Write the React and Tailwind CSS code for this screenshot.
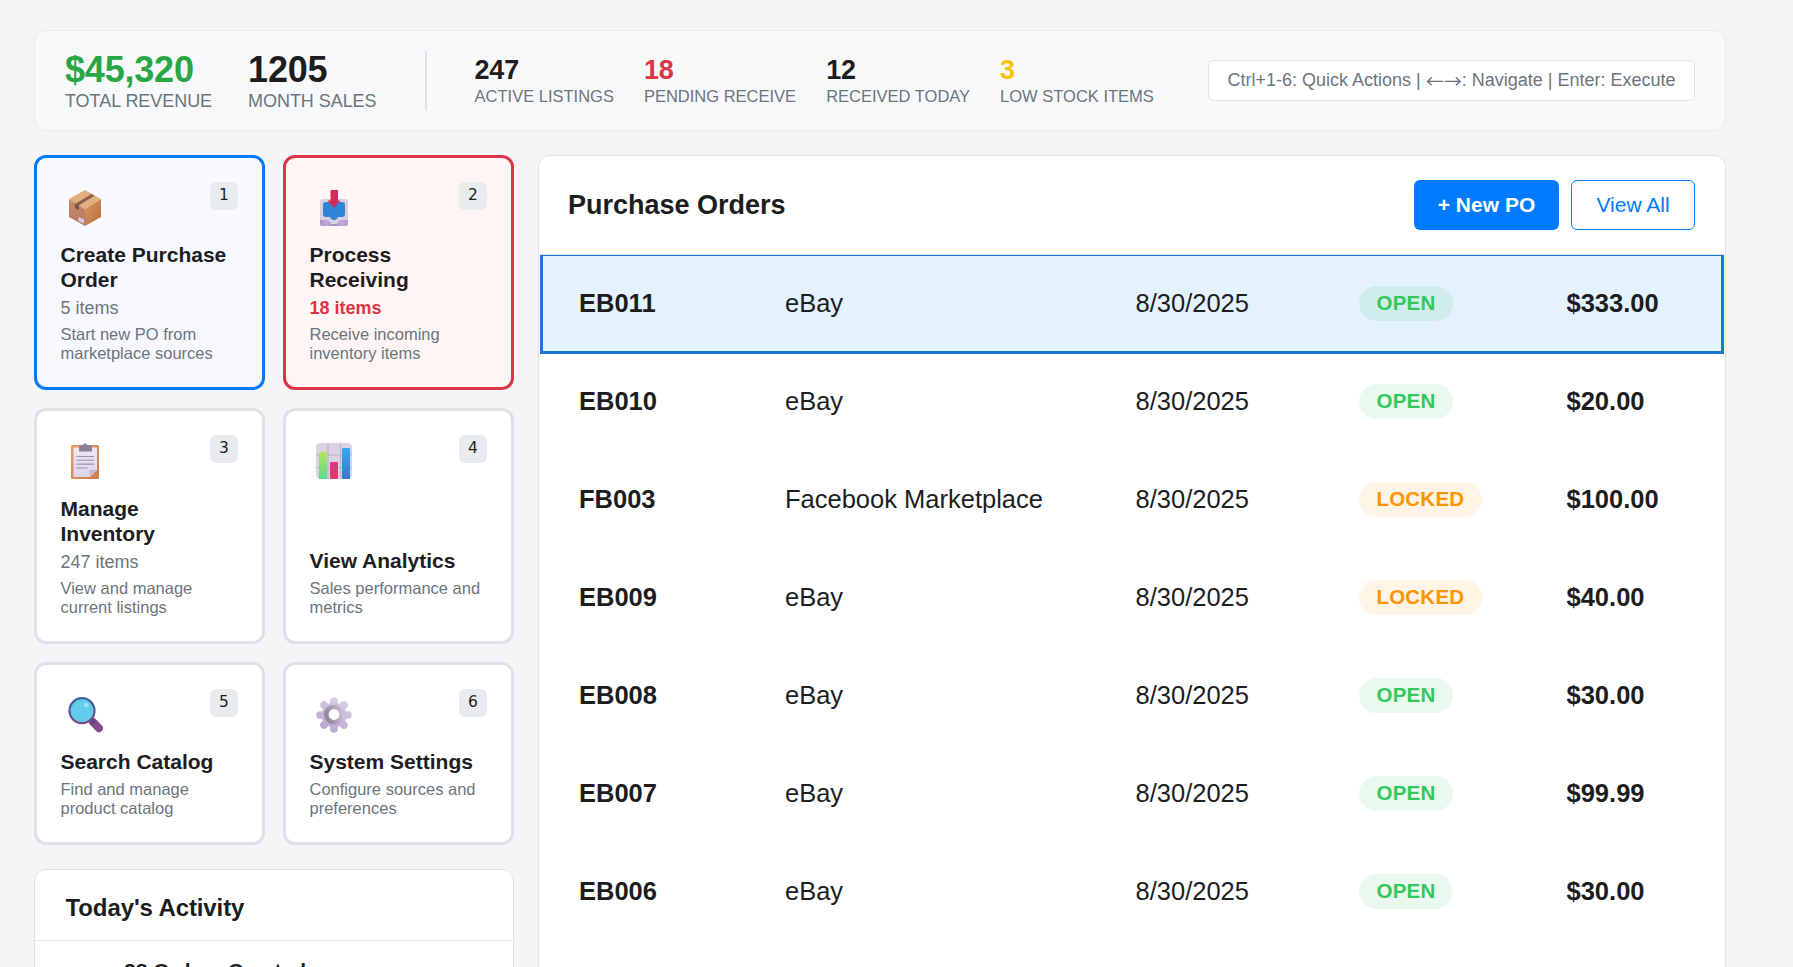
const fontStack = "font-['Liberation_Sans',Arial,sans-serif]";

function PackageIcon() {
  return (
    <svg width="36" height="36" viewBox="0 0 36 36">
      <defs>
        <linearGradient id="boxL" x1="0" y1="0" x2="0" y2="1"><stop offset="0" stopColor="#c98a66" /><stop offset="1" stopColor="#b9795f" /></linearGradient>
        <linearGradient id="boxR" x1="0" y1="0" x2="1" y2="1"><stop offset="0" stopColor="#d79c6c" /><stop offset="1" stopColor="#b9692f" /></linearGradient>
      </defs>
      <path d="M18 0 34 9 18 19 2 9Z" fill="#dfb07e" />
      <path d="M2 9 18 19V36L2 27Z" fill="url(#boxL)" />
      <path d="M34 9 18 19V36L34 27Z" fill="url(#boxR)" />
      <path d="M8 14 24.500 4 27.500 5.800 12 15.300V20L8 17.700Z" fill="#8d5f4c" />
      <path d="M8 14 12 15.500V20L8 17.700Z" fill="#77564f" />
      <path d="M11.500 27 17 29.500V33.500L11.500 31Z" fill="#dccbe0" />
    </svg>
  );
}

function InboxIcon() {
  return (
    <svg width="36" height="36" viewBox="-1 0 36 36">
      <defs>
        <linearGradient id="arrow" x1="0" y1="0" x2="1" y2="0"><stop offset="0" stopColor="#e02a3c" /><stop offset="1" stopColor="#c42a7c" /></linearGradient>
        <linearGradient id="tray" x1="0" y1="0" x2="1" y2="0"><stop offset="0" stopColor="#a595c4" /><stop offset=".25" stopColor="#c3a8dc" /><stop offset=".5" stopColor="#a48bbf" /><stop offset=".75" stopColor="#c3a8dc" /><stop offset="1" stopColor="#b09ccd" /></linearGradient>
      </defs>
      <rect x="3" y="9" width="28" height="27" rx="3" fill="#d8d0e2" />
      <path d="M3 30H11L14 33.500H20L23 30H31V34Q31 36 29 36H5Q3 36 3 34Z" fill="url(#tray)" />
      <path d="M12 29H22L20 34H14Z" fill="#d8d0e2" />
      <path d="M9 12H25Q28 12 28 15V24Q28 27 25 27H21Q20 30 17 30T13 27H9Q6 27 6 24V15Q6 12 9 12Z" fill="#2f84d5" />
      <path d="M14 0H20.500Q21 0 21 .6V10.500H23.500L17 18 10.500 10.500H13.500V.5Q13.500 0 14 0Z" fill="url(#arrow)" />
    </svg>
  );
}

function ClipboardIcon() {
  return (
    <svg width="36" height="36" viewBox="0 0 36 36">
      <defs>
        <linearGradient id="board" x1="0" y1="0" x2="1" y2="1"><stop offset="0" stopColor="#e5a06b" /><stop offset="1" stopColor="#cf7c45" /></linearGradient>
        <linearGradient id="paper" x1="0" y1="0" x2="0" y2="1"><stop offset="0" stopColor="#ece6f5" /><stop offset="1" stopColor="#dfd5ec" /></linearGradient>
      </defs>
      <rect x="4" y="2" width="28" height="34" rx="1.500" fill="url(#board)" />
      <path d="M6.500 4.500H30V27L23 34H6.500Z" fill="url(#paper)" />
      <path d="M22.500 34V27H30Z" fill="#c5b9d5" />
      <path d="M16 2Q18 -1.500 20 2H22Q25 2 25 5V8.500H12V5Q12 2 15 2Z" fill="#8b8190" />
      <path d="M9.500 13.500H27M9.500 17.300H27M9.500 21.100H27M9.500 25H20.500" stroke="#9d93a8" strokeWidth="1.100" />
    </svg>
  );
}

function ChartIcon() {
  return (
    <svg width="36" height="36" viewBox="0 0 36 36">
      <defs>
        <linearGradient id="g1" x1="0" y1="0" x2="0" y2="1"><stop offset="0" stopColor="#b6e35c" /><stop offset="1" stopColor="#5bd98d" /></linearGradient>
        <linearGradient id="g2" x1="0" y1="0" x2="0" y2="1"><stop offset="0" stopColor="#ea2f8e" /><stop offset="1" stopColor="#dc3c60" /></linearGradient>
        <linearGradient id="g3" x1="0" y1="0" x2="0" y2="1"><stop offset="0" stopColor="#37a8f7" /><stop offset="1" stopColor="#3b74c9" /></linearGradient>
      </defs>
      <rect width="36" height="36" rx="4.500" fill="#dad3e3" />
      <path d="M12 0V36M24.500 0V36M0 12H36M0 24.500H36" stroke="#bfb2cc" strokeWidth="1.200" />
      <rect x="3" y="9" width="8" height="27" rx="1" fill="url(#g1)" />
      <rect x="14" y="19" width="8" height="17" rx="1" fill="url(#g2)" />
      <rect x="26" y="5" width="8" height="31" rx="1" fill="url(#g3)" />
    </svg>
  );
}

function SearchIcon() {
  return (
    <svg width="36" height="36" viewBox="-1 0 36 36">
      <defs>
        <linearGradient id="rim" x1="0" y1="0" x2="0" y2="1"><stop offset="0" stopColor="#41629b" /><stop offset="1" stopColor="#734a86" /></linearGradient>
      </defs>
      <path d="M25 25 31 31.200" stroke="#844c8b" strokeWidth="8" strokeLinecap="round" />
      <path d="M22 22 26 26.200" stroke="#673e7b" strokeWidth="5" />
      <circle cx="14" cy="13.700" r="12.500" fill="#62cdeb" stroke="url(#rim)" strokeWidth="2.200" />
      <circle cx="18.500" cy="8" r="2.300" fill="#a9defa" />
    </svg>
  );
}

function GearIcon() {
  return (
    <svg width="36" height="36" viewBox="0 0 36 36">
      <defs>
        <linearGradient id="teeth" gradientUnits="userSpaceOnUse" x1="26" y1="2" x2="10" y2="34"><stop offset="0" stopColor="#d8cfe6" /><stop offset="1" stopColor="#b8a6d2" /></linearGradient>
        <linearGradient id="ring" x1="0" y1="0.300" x2="1" y2="0"><stop offset="0" stopColor="#94899f" /><stop offset="1" stopColor="#cabfd8" /></linearGradient>
      </defs>
      <path d="M18 4V32M4 18H32M8 8 28 28M28 8 8 28" stroke="url(#teeth)" strokeWidth="7.600" strokeLinecap="round" />
      <circle cx="18" cy="18" r="12.500" fill="url(#teeth)" />
      <circle cx="18" cy="17.500" r="7.700" fill="#fff" stroke="url(#ring)" strokeWidth="4.600" />
    </svg>
  );
}

const metrics = [
  { value: "247", label: "ACTIVE LISTINGS", color: "text-[#1d1d1f]" },
  { value: "18", label: "PENDING RECEIVE", color: "text-[#dc3545]" },
  { value: "12", label: "RECEIVED TODAY", color: "text-[#1d1d1f]" },
  { value: "3", label: "LOW STOCK ITEMS", color: "text-[#ffc107]" },
];

const plain = "border-[#dee2e6] bg-white";
const actions = [
  { key: 1, Icon: PackageIcon, title: "Create Purchase Order", count: "5 items", text: "Start new PO from marketplace sources", box: "border-[#007bff] bg-[#f8f9ff]", countStyle: "text-[#6c757d]" },
  { key: 2, Icon: InboxIcon, title: "Process Receiving", count: "18 items", text: "Receive incoming inventory items", box: "border-[#dc3545] bg-[#fff5f5]", countStyle: "text-[#dc3545] font-bold" },
  { key: 3, Icon: ClipboardIcon, title: "Manage Inventory", count: "247 items", text: "View and manage current listings", box: plain, countStyle: "text-[#6c757d]" },
  { key: 4, Icon: ChartIcon, title: "View Analytics", text: "Sales performance and metrics", box: plain },
  { key: 5, Icon: SearchIcon, title: "Search Catalog", text: "Find and manage product catalog", box: plain },
  { key: 6, Icon: GearIcon, title: "System Settings", text: "Configure sources and preferences", box: plain },
];

const orders = [
  ["EB011", "eBay", "OPEN", "$333.00"],
  ["EB010", "eBay", "OPEN", "$20.00"],
  ["FB003", "Facebook Marketplace", "LOCKED", "$100.00"],
  ["EB009", "eBay", "LOCKED", "$40.00"],
  ["EB008", "eBay", "OPEN", "$30.00"],
  ["EB007", "eBay", "OPEN", "$99.99"],
  ["EB006", "eBay", "OPEN", "$30.00"],
];

function StatsBar() {
  return (
    <header className="flex h-[101px] shrink-0 items-center rounded-xl border border-[#e9ecef] bg-[#f8f9fb] px-[30px]">
      <div className="flex gap-9">
        <div>
          <div className="pt-0.5 text-4xl leading-9 font-bold tracking-[-0.2px] text-[#28a745]">$45,320</div>
          <div className="mt-[3px] text-lg leading-5 tracking-[-0.05px] text-[#6c757d]">TOTAL REVENUE</div>
        </div>
        <div>
          <div className="pt-0.5 text-4xl leading-9 font-bold tracking-[-0.2px]">1205</div>
          <div className="mt-[3px] text-lg leading-5 tracking-[-0.05px] text-[#6c757d]">MONTH SALES</div>
        </div>
      </div>
      <div className="mx-12 h-[60px] w-0.5 bg-[#dee2e6]" />
      <div className="flex gap-[30px]">
        {metrics.map((m) => (
          <div key={m.label}>
            <div className={`text-[27px] leading-7 font-bold tracking-[-0.2px] ${m.color}`}>{m.value}</div>
            <div className="mt-0.5 text-[16.5px] leading-5 text-[#6c757d]">{m.label}</div>
          </div>
        ))}
      </div>
      <div className="ml-auto flex h-[41px] w-[487px] items-center justify-center rounded-md border border-[#dee2e6] bg-white pb-0.5 text-lg whitespace-pre text-[#6c757d]">
        Ctrl+1-6: Quick Actions | <span className="font-['Noto_Sans_CJK_SC',sans-serif] leading-5">←→</span>: Navigate | Enter: Execute
      </div>
    </header>
  );
}

function ActionCard({ action }) {
  const { Icon } = action;
  return (
    <div className={`flex flex-col justify-between rounded-xl border-3 py-6 pr-6 pl-[23.5px] ${action.box}`}>
      <div className="flex items-start justify-between">
        <div className="pt-2 pl-[6.5px]"><Icon /></div>
        <div className="flex size-7 items-center justify-center rounded-md bg-[#e9ecef] font-['DejaVu_Sans',sans-serif] text-[15.5px]">{action.key}</div>
      </div>
      <div>
        <div className="text-[21px] leading-[25.2px] font-bold">{action.title}</div>
        {action.count && <div className={`mt-[5px] text-lg leading-[22px] ${action.countStyle}`}>{action.count}</div>}
        <div className="mt-1.5 text-[16.5px] leading-[19px] text-[#6c757d]">{action.text}</div>
      </div>
    </div>
  );
}

function Status({ value }) {
  const tone = value === "OPEN" ? "bg-[#34c759]/10 text-[#34c759]" : "bg-[#ff9500]/10 text-[#ff9500]";
  return <span className={`inline-flex h-[35px] items-center rounded-[18px] px-[18px] text-[20.5px] font-bold tracking-[0.2px] ${tone}`}>{value}</span>;
}

function Orders() {
  return (
    <section className="flex grow flex-col rounded-t-xl border border-b-0 border-[#e1e1e6] bg-white">
      <div className="flex h-[99px] shrink-0 items-center justify-between border-b border-[#e1e1e6] pr-[30px] pl-[29px]">
        <h2 className="text-[27px] font-bold">Purchase Orders</h2>
        <div className="flex gap-3">
          <button className="h-[50px] w-[145px] rounded-md bg-[#007bff] text-[21px] font-bold text-white">+ New PO</button>
          <button className="h-[50px] w-[124px] rounded-md border border-[#007bff] bg-white text-[21px] text-[#007bff]">View All</button>
        </div>
      </div>
      <div className="px-px">
        {orders.map(([id, source, status, total], i) => (
          <div
            key={id}
            className={`grid grid-cols-[206px_350.500px_223px_208px_1fr] items-center pl-9 text-[25.5px] ${i === 0 ? "h-[99px] border-3 border-t border-[#1976d2] bg-[#e3f2fd]" : "h-[98px] border-x-3 border-transparent pb-[3px]"}`}
          >
            <div className="font-bold">{id}</div>
            <div>{source}</div>
            <div>8/30/2025</div>
            <div className="flex"><Status value={status} /></div>
            <div className="font-bold">{total}</div>
          </div>
        ))}
      </div>
    </section>
  );
}

export default function App() {
  return (
    <div className={`flex h-[967px] flex-col gap-6 overflow-hidden bg-[#f5f5f7] pt-[30px] pr-[67px] pl-[34px] text-[#1d1d1f] ${fontStack}`}>
      <StatsBar />
      <main className="flex min-h-0 grow gap-6">
        <div className="flex w-[480px] shrink-0 flex-col gap-6">
          <div className="grid shrink-0 grid-cols-2 grid-rows-[235px_236px_183px] gap-[18px]">
            {actions.map((a) => <ActionCard key={a.key} action={a} />)}
          </div>
          <section className="shrink-0 rounded-t-xl border border-[#dee2e6] bg-white">
            <h3 className="flex h-[71px] items-center border-b border-[#dee2e6] px-[30.5px] pt-1.5 text-2xl font-bold tracking-[-0.1px]">Today's Activity</h3>
            <div className="pt-[18px] pl-[89px] text-[21px] leading-6 font-bold">28 Orders Created</div>
          </section>
        </div>
        <Orders />
      </main>
    </div>
  );
}
